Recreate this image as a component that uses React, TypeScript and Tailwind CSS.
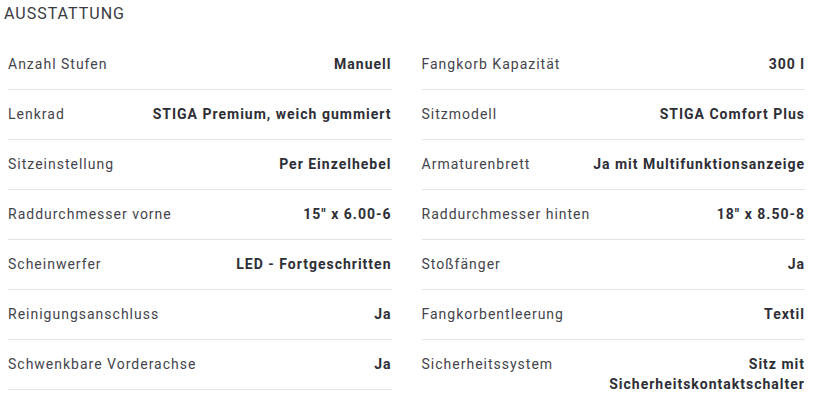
const left: [string, string][] = [
  ["Anzahl Stufen", "Manuell"],
  ["Lenkrad", "STIGA Premium, weich gummiert"],
  ["Sitzeinstellung", "Per Einzelhebel"],
  ["Raddurchmesser vorne", "15\" x 6.00-6"],
  ["Scheinwerfer", "LED - Fortgeschritten"],
  ["Reinigungsanschluss", "Ja"],
  ["Schwenkbare Vorderachse", "Ja"],
];

const right: [string, string][] = [
  ["Fangkorb Kapazität", "300 l"],
  ["Sitzmodell", "STIGA Comfort Plus"],
  ["Armaturenbrett", "Ja mit Multifunktionsanzeige"],
  ["Raddurchmesser hinten", "18\" x 8.50-8"],
  ["Stoßfänger", "Ja"],
  ["Fangkorbentleerung", "Textil"],
  ["Sicherheitssystem", "Sitz mit Sicherheitskontaktschalter"],
];

function SpecRow({ label, value }: { label: string; value: string }) {
  return (
    <div className="flex justify-between gap-4 border-b border-[#e4e4e4] pt-[14px] pb-[15px] text-[14px] leading-5 tracking-[1px]">
      <span className="text-[#44444c] shrink-0">{label}</span>
      <span className="font-bold text-[#2e2e36] text-right">{value}</span>
    </div>
  );
}

function SpecColumn({ rows }: { rows: [string, string][] }) {
  return (
    <div className="flex flex-col">
      {rows.map(([label, value]) => (
        <SpecRow key={label} label={label} value={value} />
      ))}
    </div>
  );
}

export default function App() {
  return (
    <div className="bg-white w-[816px] h-[408px] overflow-hidden font-['Roboto',sans-serif]">
      <h2 className="pl-1 pt-[4px] text-[16px] leading-5 tracking-[1px] text-[#3a3a42]">AUSSTATTUNG</h2>
      <div className="grid grid-cols-2 gap-x-[30px] pl-2 pr-[11px] mt-4">
        <SpecColumn rows={left} />
        <SpecColumn rows={right} />
      </div>
    </div>
  );
}
